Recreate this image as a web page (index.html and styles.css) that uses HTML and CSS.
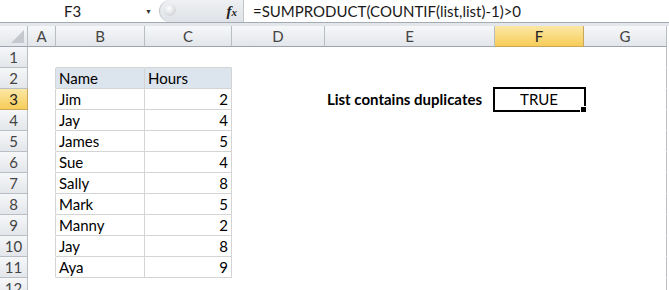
FILE: index.html
```html
<!DOCTYPE html>
<html lang="en">
<head>
    <meta charset="UTF-8">
    <title>List contains duplicates</title>
    <link rel="stylesheet" href="styles.css">
</head>
<body>
    <div class="formula-bar">
        <div class="name-box">F3</div>
        <div class="name-drop">&#9660;</div>
        <div class="fx-box">
            <span class="fx-knob"></span>
            <span class="fx">f<i>x</i></span>
        </div>
        <div class="formula">=SUMPRODUCT(COUNTIF(list,list)-1)&gt;0</div>
    </div>
    <div class="bar-gap"></div>

    <table class="sheet">
        <colgroup>
            <col style="width: 28px">
            <col style="width: 28px">
            <col style="width: 89px">
            <col style="width: 87px">
            <col style="width: 93px">
            <col style="width: 170px">
            <col style="width: 89px">
            <col style="width: 83px">
        </colgroup>
        <tr class="col-heads">
            <th class="corner"><span class="corner-tri"></span></th>
            <th>A</th><th>B</th><th>C</th><th>D</th><th>E</th><th class="active">F</th><th>G</th>
        </tr>
        <tr>
            <th class="row-head">1</th>
            <td></td><td class="above"></td><td class="above"></td><td></td><td></td><td></td><td></td>
        </tr>
        <tr>
            <th class="row-head">2</th>
            <td class="left-of"></td><td class="t head">Name</td><td class="t head">Hours</td><td></td><td></td><td></td><td></td>
        </tr>
        <tr>
            <th class="row-head active">3</th>
            <td class="left-of"></td><td class="t">Jim</td><td class="t num">2</td><td></td>
            <td class="label">List contains duplicates</td>
            <td class="result">TRUE<span class="fill-handle"></span></td><td></td>
        </tr>
        <tr>
            <th class="row-head">4</th>
            <td class="left-of"></td><td class="t">Jay</td><td class="t num">4</td><td></td><td></td><td></td><td></td>
        </tr>
        <tr>
            <th class="row-head">5</th>
            <td class="left-of"></td><td class="t">James</td><td class="t num">5</td><td></td><td></td><td></td><td></td>
        </tr>
        <tr>
            <th class="row-head">6</th>
            <td class="left-of"></td><td class="t">Sue</td><td class="t num">4</td><td></td><td></td><td></td><td></td>
        </tr>
        <tr>
            <th class="row-head">7</th>
            <td class="left-of"></td><td class="t">Sally</td><td class="t num">8</td><td></td><td></td><td></td><td></td>
        </tr>
        <tr>
            <th class="row-head">8</th>
            <td class="left-of"></td><td class="t">Mark</td><td class="t num">5</td><td></td><td></td><td></td><td></td>
        </tr>
        <tr>
            <th class="row-head">9</th>
            <td class="left-of"></td><td class="t">Manny</td><td class="t num">2</td><td></td><td></td><td></td><td></td>
        </tr>
        <tr>
            <th class="row-head">10</th>
            <td class="left-of"></td><td class="t">Jay</td><td class="t num">8</td><td></td><td></td><td></td><td></td>
        </tr>
        <tr>
            <th class="row-head">11</th>
            <td class="left-of"></td><td class="t">Aya</td><td class="t num">9</td><td></td><td></td><td></td><td></td>
        </tr>
        <tr>
            <th class="row-head">12</th>
            <td></td><td></td><td></td><td></td><td></td><td></td><td></td>
        </tr>
    </table>
</body>
</html>
```

FILE: styles.css
```css
body {
    margin: 0;
    background: #fff;
    font-family: Lato, "Open Sans", sans-serif;
    overflow: hidden;
}

/* formula bar */
.formula-bar {
    display: flex;
    align-items: center;
    height: 22px;
    border-bottom: 1px solid #a5abb3;
    background: #fff;
    font-size: 15px;
    color: #1a1a1a;
}

.name-box {
    width: 145px;
    text-align: center;
}

.name-drop {
    width: 14px;
    font-size: 7px;
    color: #333;
}

.fx-box {
    position: relative;
    display: flex;
    align-items: center;
    justify-content: flex-end;
    width: 84px;
    height: 22px;
    box-sizing: border-box;
    padding-right: 6px;
    border-radius: 11px 0 0 11px;
    border-left: 1px solid #c3c7cc;
    background: linear-gradient(#eef0f3, #dfe2e6);
}

.fx-knob {
    position: absolute;
    left: 4px;
    top: 4px;
    width: 12px;
    height: 12px;
    border-radius: 50%;
    background: radial-gradient(circle at 40% 35%, #fff, #d4d7db 70%);
}

.fx {
    font-family: "Liberation Serif", serif;
    font-style: italic;
    font-weight: bold;
    font-size: 15px;
    color: #222;
}

.fx i {
    font-size: 11px;
}

.formula {
    flex: 1;
    height: 22px;
    line-height: 22px;
    padding-left: 9px;
    border-left: 1px solid #c3c7cc;
}

.bar-gap {
    height: 3px;
    background: #e3e6ea;
}

/* sheet grid */
.sheet {
    border-collapse: separate;
    border-spacing: 0;
    table-layout: fixed;
    width: 667px;
    font-size: 15px;
    color: #000;
}

.sheet th,
.sheet td {
    height: 20px;
    padding: 0;
    border-right: 1px solid #fff;
    border-bottom: 1px solid #fff;
    white-space: nowrap;
    overflow: visible;
}

.sheet tr > :last-child {
    border-right-color: #b9bec5;
}

.sheet th {
    font-weight: normal;
    color: #444;
    background: linear-gradient(#f6f7f9, #e3e6ea);
    border-right-color: #b9bec5;
    border-bottom-color: #b9bec5;
    text-align: center;
}

.col-heads th {
    border-bottom-color: #9ea4ad;
}

.sheet th.active {
    background: linear-gradient(#fbe7a6, #f7cd58);
    border-right-color: #c9a65a;
    border-bottom-color: #c9a65a;
    color: #222;
}

.corner {
    position: relative;
}

.corner-tri {
    position: absolute;
    right: 3px;
    bottom: 3px;
    border-left: 13px solid transparent;
    border-bottom: 13px solid #c5c9ce;
}

.row-head {
    border-right-color: #9ea4ad;
}

/* data table */
.above {
    border-bottom-color: #d4d4d4 !important;
}

.left-of {
    border-right-color: #d4d4d4 !important;
}

.t {
    padding: 0 3px !important;
    border-right-color: #d4d4d4 !important;
    border-bottom-color: #d4d4d4 !important;
}

.t.head {
    background: #dce4ee;
}

.num {
    text-align: right;
}

.label {
    font-weight: bold;
    text-align: right;
    padding-right: 12px !important;
}

.result {
    position: relative;
    text-align: center;
    outline: 2px solid #000;
    outline-offset: 0;
}

.fill-handle {
    position: absolute;
    right: -4px;
    bottom: -4px;
    width: 5px;
    height: 5px;
    background: #000;
    border: 1px solid #fff;
}
```
